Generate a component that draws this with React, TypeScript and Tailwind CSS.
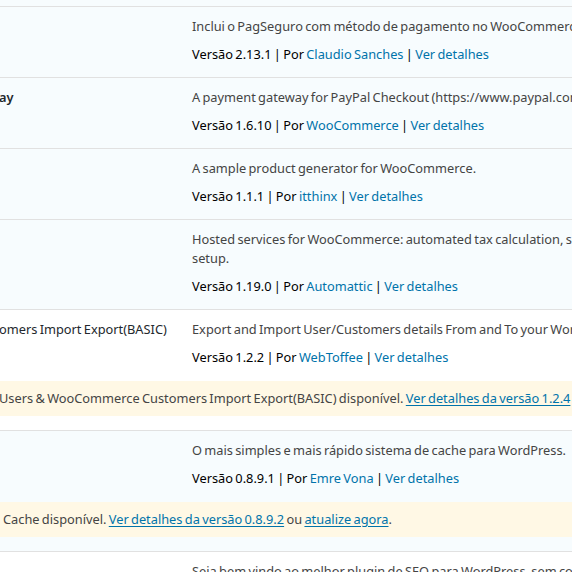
import React from "react";
import clsx from "clsx";

type Plugin = {
  title?: string;
  bold?: boolean;
  desc: string[];
  version: string;
  author: string;
  active: boolean;
  notice?: React.ReactNode;
};

const Link = ({ children, underline }: { children: React.ReactNode; underline?: boolean }) => (
  <a href="#" className={clsx("text-[#0073aa]", underline && "underline underline-offset-2")}>
    {children}
  </a>
);

const plugins: Plugin[] = [
  {
    desc: ["Inclui o PagSeguro com método de pagamento no WooCommerce."],
    version: "2.13.1",
    author: "Claudio Sanches",
    active: true,
  },
  {
    title: "ay",
    bold: true,
    desc: ["A payment gateway for PayPal Checkout (https://www.paypal.com/us/webapps/mpp/paypal-checkout)."],
    version: "1.6.10",
    author: "WooCommerce",
    active: true,
  },
  {
    desc: ["A sample product generator for WooCommerce."],
    version: "1.1.1",
    author: "itthinx",
    active: true,
  },
  {
    desc: [
      "Hosted services for WooCommerce: automated tax calculation, shipping label printing, and smoother payment",
      "setup.",
    ],
    version: "1.19.0",
    author: "Automattic",
    active: true,
  },
  {
    title: "omers Import Export(BASIC)",
    desc: ["Export and Import User/Customers details From and To your WordPress/WooCommerce."],
    version: "1.2.2",
    author: "WebToffee",
    active: false,
    notice: (
      <div className="-ml-px">
        Users &amp; WooCommerce Customers Import Export(BASIC) disponível.{" "}
        <Link underline>Ver detalhes da versão 1.2.4</Link> ou <Link underline>atualize agora</Link>.
      </div>
    ),
  },
  {
    desc: ["O mais simples e mais rápido sistema de cache para WordPress."],
    version: "0.8.9.1",
    author: "Emre Vona",
    active: true,
    notice: (
      <div className="pl-[3px]">
        Cache disponível. <Link underline>Ver detalhes da versão 0.8.9.2</Link> ou{" "}
        <Link underline>atualize agora</Link>.
      </div>
    ),
  },
  {
    desc: ["Seja bem vindo ao melhor plugin de SEO para WordPress, sem complicações."],
    version: "3.2.0",
    author: "Yoast",
    active: false,
  },
];

const Row = ({ p }: { p: Plugin }) => (
  <div
    className={clsx(
      "border-b border-[#e1e1e1]",
      p.active ? "bg-[#f7fcfe]" : "bg-white"
    )}
  >
    <div className={clsx("flex pt-[10px]", p.notice ? "pb-[14px]" : "pb-[13px]")}>
      <div className="w-[192px] shrink-0 overflow-hidden">
        {p.title && (
          <div
            className={clsx(
              "-ml-px whitespace-nowrap leading-[19px] text-[#23282d]",
              p.bold && "font-semibold"
            )}
          >
            {p.title}
          </div>
        )}
      </div>
      <div className="min-w-0 flex-1">
        {p.desc.map((line) => (
          <div key={line} className="whitespace-nowrap leading-[19px] text-[#444]">
            {line}
          </div>
        ))}
        <div className="mt-[8px] whitespace-nowrap leading-[20px] text-black">
          Versão {p.version} | Por <Link>{p.author}</Link> | <Link>Ver detalhes</Link>
        </div>
      </div>
    </div>
    {p.notice && (
      <div className="mb-[14px] whitespace-nowrap bg-[#fff8e5] py-[8px] leading-[19px] text-[#444]">
        {p.notice}
      </div>
    )}
  </div>
);

export default function App() {
  return (
    <div className="h-[572px] w-[572px] overflow-hidden bg-white font-['Noto_Sans',sans-serif] text-[12.8px] [word-spacing:-1px]">
      <div className="h-[7px] border-b border-[#e1e1e1] bg-[#f7fcfe]" />
      {plugins.map((p, i) => (
        <Row key={i} p={p} />
      ))}
    </div>
  );
}
